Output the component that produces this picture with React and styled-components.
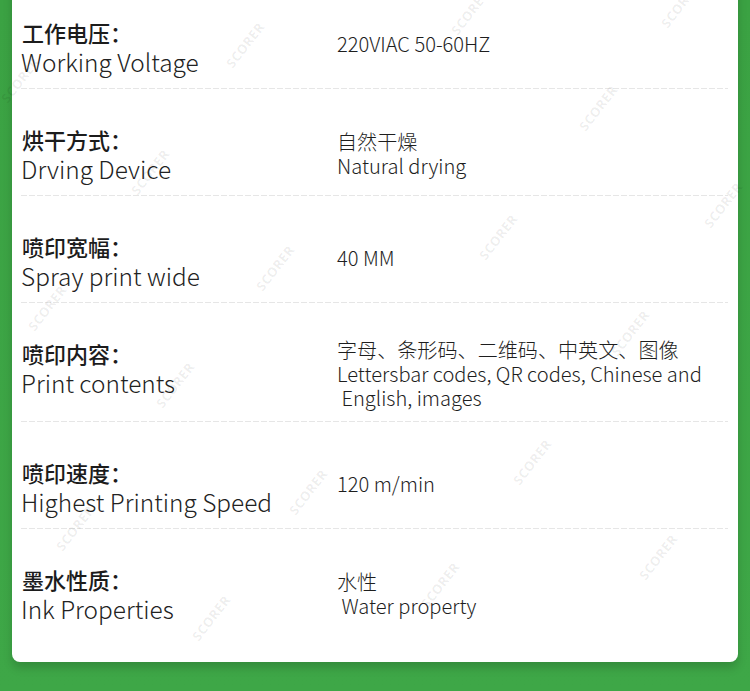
import React from 'react';
import styled, { createGlobalStyle } from 'styled-components';

const GlobalStyle = createGlobalStyle`
	html, body {
		margin: 0;
		padding: 0;
	}
	body {
		background-color: #3da446;
		font-family: "Noto Sans CJK SC", "Noto Sans", sans-serif;
		min-height: 691px;
		overflow: hidden;
	}
`;

const Page = styled.div`
	position: relative;
	width: 750px;
	height: 691px;
	overflow: hidden;
	background: linear-gradient(180deg, #3ba243 0%, #3ea747 100%);
`;

const Card = styled.div`
	margin: -18px 12px 0;
	padding: 0 10px 0 9px;
	background-color: #ffffff;
	border-radius: 0 0 8px 8px;
	box-shadow: 0 6px 10px rgba(0, 0, 0, 0.16);
`;

const Row = styled.div`
	display: flex;
	align-items: flex-start;
	padding: 35px 0 ${(p) => (p.$last ? '38px' : '12px')};
	background-image: ${(p) =>
		p.$last ? 'none' : 'linear-gradient(to right, #e6e6e6 70%, transparent 0)'};
	background-size: 8px 1px;
	background-repeat: repeat-x;
	background-position: left bottom;
`;

const Label = styled.div`
	flex: 0 0 316px;
	display: flex;
	flex-direction: column;
`;

const LabelCn = styled.div`
	font-size: 22px;
	line-height: 30px;
	font-weight: 500;
	color: #1c1c1c;
	padding-left: 1px;
`;

const LabelEn = styled.div`
	font-size: 24.4px;
	line-height: 30px;
	font-weight: 300;
	color: #222222;
`;

const Value = styled.div`
	flex: 1;
	align-self: center;
	margin-bottom: ${(p) => (p.$single ? '6px' : '0')};
	font-size: 20.1px;
	line-height: 24px;
	font-weight: 300;
	color: #1e1e1e;
	white-space: pre-wrap;
`;

const Marks = styled.div`
	position: absolute;
	inset: 0;
	pointer-events: none;
`;

const Mark = styled.span`
	position: absolute;
	font-family: "Noto Sans", sans-serif;
	font-size: 13px;
	font-weight: 700;
	letter-spacing: 0.5px;
	color: rgba(0, 0, 0, 0.07);
	transform: translate(-50%, -50%) rotate(-52deg);
`;

const specs = [
	{ cn: '工作电压：', en: 'Working Voltage', value: ['220VIAC 50-60HZ'] },
	{ cn: '烘干方式：', en: 'Drving Device', value: ['自然干燥', 'Natural drying'] },
	{ cn: '喷印宽幅：', en: 'Spray print wide', value: ['40 MM'] },
	{
		cn: '喷印内容：',
		en: 'Print contents',
		value: ['字母、条形码、二维码、中英文、图像', 'Lettersbar codes, QR codes, Chinese and', ' English, images']
	},
	{ cn: '喷印速度：', en: 'Highest Printing Speed', value: ['120 m/min'] },
	{ cn: '墨水性质：', en: 'Ink Properties', value: ['水性', ' Water property'] }
];

const marks = [
	[20, 80], [245, 45], [470, 12], [680, 5], [598, 108], [150, 172],
	[723, 205], [498, 237], [275, 268], [47, 308], [630, 333], [175, 385],
	[532, 462], [308, 492], [75, 528], [658, 557], [440, 585], [211, 618]
];

export default function App() {
	return (
		<Page>
			<GlobalStyle />
			<Card>
				{specs.map((s, i) => (
					<Row key={s.en} $last={i === specs.length - 1}>
						<Label>
							<LabelCn>{s.cn}</LabelCn>
							<LabelEn>{s.en}</LabelEn>
						</Label>
						<Value $single={s.value.length === 1}>
							{s.value.map((line) => (
								<div key={line}>{line}</div>
							))}
						</Value>
					</Row>
				))}
			</Card>
			<Marks>
				{marks.map(([x, y]) => (
					<Mark key={x + '-' + y} style={{ left: x, top: y }}>
						SCORER
					</Mark>
				))}
			</Marks>
		</Page>
	);
}
